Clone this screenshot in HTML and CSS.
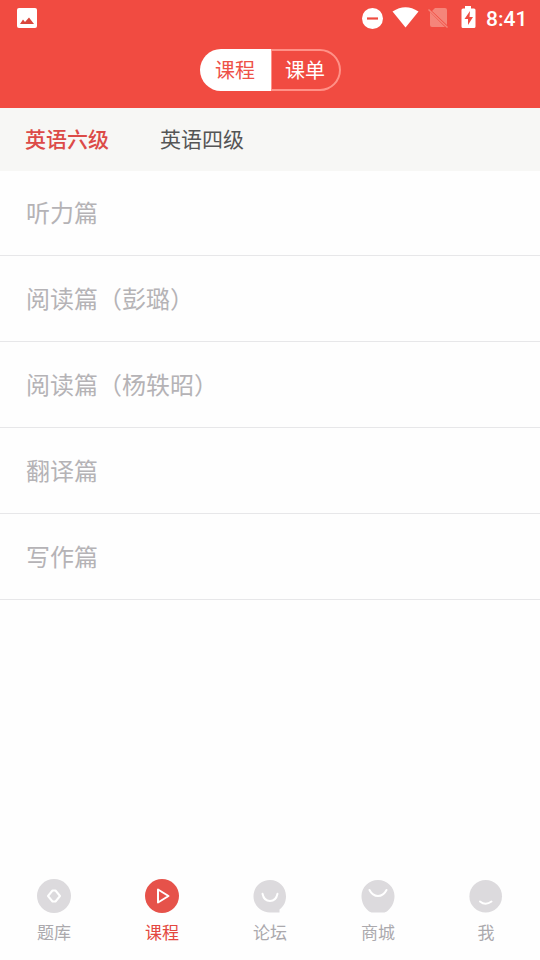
FILE: index.html
```
<!DOCTYPE html>
<html lang="zh-CN">
<head>
<meta charset="utf-8">
<title>课程</title>
<link rel="stylesheet" href="styles.css">
</head>
<body>
<div class="app">
  <header class="header">
    <div class="status">
      <svg class="picture" width="20" height="20" viewBox="0 0 20 20"><rect width="20" height="20" rx="2" fill="#fff"/><path d="M3 16 6 11.500 8 14 12 9.500 17 16Z" fill="#d9473d"/></svg>
      <svg class="indicators" width="116" height="29" viewBox="0 0 116 29">
        <circle cx="10.500" cy="18.500" r="10.500" fill="#fff"/>
        <path d="M5 18.500h11" stroke="#ef4b40" stroke-width="2.200"/>
        <path d="M30.500 11.500Q43.500 3 56.500 11.500L43.500 27.500Z" fill="#fff"/>
        <path d="M73 8h10a2 2 0 0 1 2 2v15L70 11ZM68 12 83 27H70a2 2 0 0 1-2-2Z" fill="#f5857a"/>
        <path d="M66.500 9.500 85.500 27.500" stroke="#f5857a" stroke-width="1.500"/>
        <path d="M103 6h6v2.500h3a1.500 1.500 0 0 1 1.500 1.500v16.500a1.500 1.500 0 0 1-1.500 1.500h-11a1.500 1.500 0 0 1-1.500-1.500V10a1.500 1.500 0 0 1 1.500-1.500h2Z" fill="#fff"/>
        <path d="M108 11 102.500 19h3.500v6L111 17h-3.500Z" fill="#ef4b40"/>
      </svg>
      <span class="time">8:41</span>
    </div>
    <div class="toggle"><span class="option selected">课程</span><span class="option other">课单</span></div>
  </header>
  <nav class="tabs"><span class="tab active">英语六级</span><span class="tab">英语四级</span></nav>
  <main class="list">
    <div class="row">听力篇</div>
    <div class="row">阅读篇（彭璐）</div>
    <div class="row">阅读篇（杨轶昭）</div>
    <div class="row">翻译篇</div>
    <div class="row">写作篇</div>
  </main>
  <footer class="bottom">
    <div class="item"><svg class="icon" viewBox="0 0 34 34"><circle cx="17" cy="17" r="17"/><path class="line" d="M15.500 11.500h3L23 17l-4.500 5.500h-3L11 17Z"/></svg><span>题库</span></div>
    <div class="item current"><svg class="icon" viewBox="0 0 34 34"><circle cx="17" cy="17" r="17"/><path class="line" d="M13 10.500v13L23.500 17Z"/></svg><span>课程</span></div>
    <div class="item"><svg class="icon" viewBox="0 0 34 34"><path d="M17 1C7.500 1 .5 8 .5 17.300S8 33.500 17 33.500h9.500V30.500C31 27.500 33 22.500 33 17.300 33 8 26 1 17 1Z"/><path class="line" d="M9.500 14.800C11.500 24.500 22.500 24.500 24.500 14.800"/></svg><span>论坛</span></div>
    <div class="item"><svg class="icon" viewBox="0 0 34 34"><path d="M17 1C8 1 .5 8 .5 17c0 6 2.500 11 6.500 14.500 1.500 1.500 3 2 5 2h10c2 0 3.500-.5 5-2C31 28 33.500 23 33.500 17 33.500 8 26 1 17 1Z"/><path class="line" d="M8.500 11C12.500 19 21.500 19 25.500 11"/></svg><span>商城</span></div>
    <div class="item"><svg class="icon" viewBox="0 0 34 34"><circle cx="16.700" cy="17.300" r="16.300"/><path class="line" d="M11 22.500Q16.500 27 22.500 22.500"/></svg><span>我</span></div>
  </footer>
</div>
</body>
</html>
```
FILE: styles.css
```
* { box-sizing: border-box; }
body {
  margin: 0;
  background: #fefefe;
  font-family: "Noto Sans CJK SC", sans-serif;
  font-weight: 400;
}
.app { width: 540px; height: 960px; display: flex; flex-direction: column; }
.header { height: 108px; background: #f14b41; }
.status { height: 48px; display: flex; align-items: flex-start; padding-right: 13px; }
.picture { margin: 8px 0 0 17px; }
.indicators { margin-left: auto; }
.time {
  width: 41px;
  margin-left: 8px;
  padding-top: 7px;
  font: 500 21px/24px Roboto, sans-serif;
  color: #fff;
  text-align: right;
  white-space: nowrap;
}
.toggle {
  display: flex;
  width: 141px;
  height: 42px;
  margin: 1px auto 0;
}
.option {
  width: 71px;
  font-size: 20px;
  line-height: 42px;
  text-align: center;
}
.selected { background: #fff; color: #ee5147; border-radius: 21px 0 0 21px; }
.other {
  width: 70px;
  border: 2px solid #ff9187;
  border-left-width: 1px;
  border-radius: 0 21px 21px 0;
  color: #fff;
  line-height: 38px;
}
.tabs {
  display: flex;
  gap: 51px;
  height: 63px;
  padding-left: 25px;
  background: #f7f7f5;
  font-size: 21px;
  line-height: 61px;
  color: #555;
}
.active { color: #dc4b48; font-weight: 500; }
.row {
  height: 86px;
  padding-left: 26px;
  border-bottom: 1px solid #e7e7e9;
  font-size: 24px;
  line-height: 84px;
  color: #b5b3b6;
}
.row:first-child { height: 85px; line-height: 82px; }
.bottom { display: flex; margin-top: auto; height: 81px; }
.item {
  flex: 1;
  display: flex;
  flex-direction: column;
  align-items: center;
  font-size: 17px;
  line-height: 24px;
  color: #aba9ad;
}
.icon { width: 34px; height: 34px; margin-bottom: 7px; fill: #dcdadd; }
.line { fill: none; stroke: #fff; stroke-width: 2; stroke-linejoin: round; stroke-linecap: round; }
.current { color: #e44740; }
.current .icon { fill: #e6524a; }
```
